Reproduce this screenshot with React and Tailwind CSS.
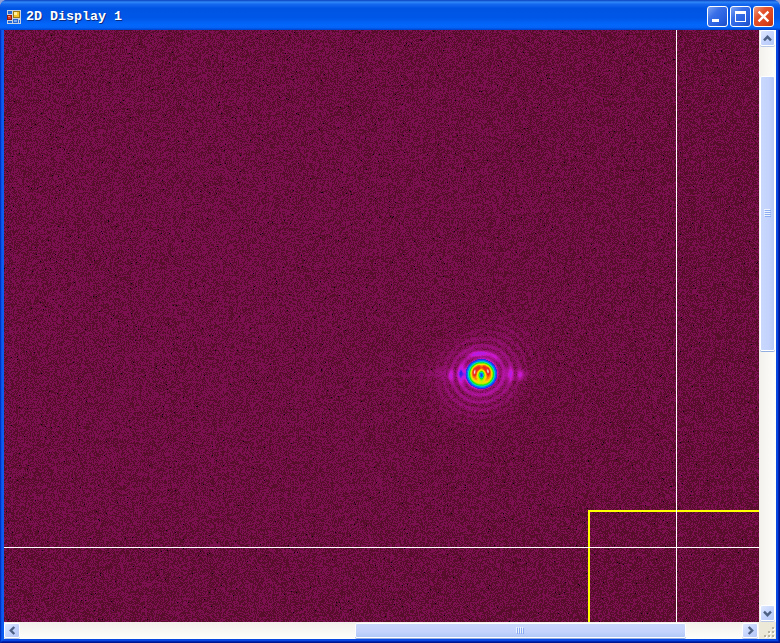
import { useEffect, useRef } from "react";

const W = 755;
const H = 592;

const STOPS = [
  [0.0, 88, 13, 42],
  [0.08, 126, 16, 82],
  [0.17, 158, 18, 130],
  [0.27, 205, 24, 205],
  [0.33, 170, 28, 235],
  [0.4, 50, 30, 225],
  [0.47, 0, 120, 250],
  [0.53, 0, 225, 190],
  [0.6, 20, 225, 20],
  [0.7, 190, 240, 0],
  [0.77, 255, 215, 0],
  [0.83, 250, 110, 10],
  [0.89, 232, 36, 24],
  [0.95, 235, 70, 60],
  [1.02, 245, 235, 235],
];

function colour(t) {
  if (t <= 0) return STOPS[0].slice(1);
  for (let i = 1; i < STOPS.length; i++) {
    if (t <= STOPS[i][0]) {
      const a = STOPS[i - 1];
      const b = STOPS[i];
      const k = (t - a[0]) / (b[0] - a[0]);
      return [1, 2, 3].map((c) => a[c] + (b[c] - a[c]) * k);
    }
  }
  return STOPS[STOPS.length - 1].slice(1);
}

const spot = (x, y, cx, cy, sx, sy) =>
  Math.exp(-(((x - cx) / sx) ** 2 + ((y - cy) / sy) ** 2) / 2);

// Beam intensity around its centre, without the sensor noise.
function beam(x, y) {
  const dx = x - 477;
  const dy = y - 343.5;
  const r = Math.hypot(dx * 0.98, dy * 1.04);
  const a = Math.atan2(dy, dx);
  if (r > 140 && Math.abs(dy) > 20) return 0;
  let t = 0;
  if (r < 15.6) {
    const k = Math.min(1, (15.6 - r) / 6);
    t = 0.35 + 0.35 * k;
    const ir = Math.hypot(dx, dy - 0.5);
    const up = 0.5 - 0.5 * Math.sin(a);
    t += 0.22 * Math.exp(-(((ir - 7) / 2.6) ** 2) / 2) * (0.15 + 0.85 * Math.sqrt(up));
    t += 0.14 * spot(dx, dy, -7, -1.8, 1.1, 2.2);
    t += 0.13 * spot(dx, dy, 6.5, -2.6, 1.1, 2);
    t -= 0.06 * spot(dx, dy, 0, -7, 1.5, 3);
    t -= 0.32 * spot(dx, dy, 0, 1, 1.8, 2.8);
    return t;
  }
  const wave = 0.5 + 0.5 * Math.cos((2 * Math.PI * (r - 22)) / 7.6 + 0.5 * Math.sin(2 * a));
  const north = Math.max(0, Math.cos(a + 0.78)) ** 6;
  const south = Math.max(0, -Math.cos(a + 0.9)) ** 2;
  t += 0.18 * Math.exp(-(r - 18) / 11) * (0.35 + 0.65 * wave);
  t += 0.03 * wave * Math.exp(-(((r - 32) / 11) ** 2));
  t += 0.04 * north * wave * Math.exp(-(((r - 50) / 14) ** 2));
  t += 0.03 * south * wave * Math.exp(-(((r - 42) / 15) ** 2));
  t += 0.29 * spot(dx, dy, -19.5, 0, 2.8, 5);
  t += 0.17 * spot(dx, dy, -3, -20, 7, 2);
  t += 0.16 * spot(dx, dy, -31, 1.5, 2.4, 4.2);
  t += 0.18 * spot(dx, dy, 28.5, 0, 2.8, 5);
  t += 0.15 * spot(dx, dy, 39, 1, 2.4, 3.8);
  t += 0.07 * spot(dx, dy, 13, -17, 5, 3);
  if (Math.abs(dx) > 35) {
    const lobes = 0.5 + 0.5 * Math.cos((2 * Math.PI * (Math.abs(dx) - 42)) / 9);
    const side = dx < 0 ? 0.085 : 0.04;
    t += side * lobes * Math.exp(-(Math.abs(dx) - 35) / 18) * Math.exp(-((dy / 7) ** 2));
    t += 0.022 * Math.exp(-(Math.abs(dx) - 35) / 65) * Math.exp(-((dy / 3) ** 2));
  }
  return t;
}

function paint(canvas) {
  const ctx = canvas.getContext("2d");
  const img = ctx.createImageData(W, H);
  let seed = 20731;
  const rand = () => {
    seed = (seed + 0x6d2b79f5) | 0;
    let t = Math.imul(seed ^ (seed >>> 15), 1 | seed);
    t = (t + Math.imul(t ^ (t >>> 7), 61 | t)) ^ t;
    return ((t ^ (t >>> 14)) >>> 0) / 4294967296;
  };
  for (let y = 0; y < H; y++) {
    const row = (rand() - 0.5) * 0.06;
    for (let x = 0; x < W; x++) {
      const raw = beam(x, y);
      const t = raw < 0.004 ? 0 : raw;
      const far = Math.hypot((x - 230) / 600, (y - 250) / 450);
      const chance = 0.57 - 0.19 * Math.min(1.2, far * far) + row + t * 4;
      let c;
      if (t < 0.27) {
        const bright = rand() < chance;
        c = colour((bright ? 0.075 : 0) + t * 0.9 + (t > 0.05 ? (rand() - 0.5) * 0.045 : 0));
        if (t < 0.04 && rand() < 0.0028) c = [8, 2, 10];
      } else {
        c = colour(t + (t < 0.45 ? 0.03 : 0) * (r01(t)) + (rand() - 0.5) * 0.02);
      }
      const i = (y * W + x) * 4;
      img.data[i] = c[0];
      img.data[i + 1] = c[1];
      img.data[i + 2] = c[2];
      img.data[i + 3] = 255;
    }
  }
  ctx.putImageData(img, 0, 0);
}

function r01(t) {
  return Math.max(0, Math.min(1, (t - 0.27) / 0.06));
}

function BeamView() {
  const ref = useRef(null);
  useEffect(() => paint(ref.current), []);
  return (
    <div className="relative h-[592px] w-[755px] shrink-0 overflow-hidden bg-[#6b0e43]">
      <canvas ref={ref} width={W} height={H} className="block" />
      <div className="absolute left-[584px] top-[480px] h-[120px] w-[180px] border-2 border-[#ffff00]" />
      <div className="absolute left-[672px] top-0 h-full w-px bg-white" />
      <div className="absolute left-0 top-[517px] h-px w-full bg-white" />
    </div>
  );
}

function AppIcon() {
  return (
    <svg width="14" height="14" viewBox="0 0 14 14" shapeRendering="crispEdges">
      <path fill="#c8d2e0" d="M0 0h14v14H0z" />
      <path fill="#2468d8" d="M1 1h4v3H1zM1 11h4v2H1zM12 10h1v3h-1z" />
      <path fill="#9a7a18" d="M6 1h7v7H6z" />
      <path fill="#f7c52c" d="M7 2h5v5H7z" />
      <path fill="#fff1a0" d="M7 2h3v3H7z" />
      <path fill="#8f1c12" d="M0 5h5v5H0z" />
      <path fill="#df4028" d="M1 6h3v3H1z" />
      <path fill="#f59a80" d="M1 6h2v1H1z" />
      <path fill="#2b67ce" d="M6 9h5v4H6z" />
      <path fill="#79aaf4" d="M7 10h3v2H7z" />
    </svg>
  );
}

function CaptionButton({ kind }) {
  const skin =
    kind === "close"
      ? "bg-[linear-gradient(135deg,#f0a084_0%,#e4532e_35%,#d8401a_75%,#b83410_100%)]"
      : "bg-[linear-gradient(135deg,#7ea5f4_0%,#3a70e8_35%,#2860e0_70%,#1e4cc4_100%)]";
  return (
    <button className={`h-[21px] w-[21px] rounded-[3px] border border-white ${skin}`}>
      <svg width="19" height="19" viewBox="0 0 19 19" shapeRendering="crispEdges" fill="#fff">
        {kind === "min" && <path d="M4 12h7v3H4z" />}
        {kind === "max" && <path fillRule="evenodd" d="M4 4h11v11H4zM5 7v7h9V7z" />}
        {kind === "close" && (
          <path
            shapeRendering="auto"
            fill="none"
            stroke="#fff"
            strokeWidth="2.3"
            d="M4.6 4.6l9.8 9.8M14.4 4.6l-9.8 9.8"
          />
        )}
      </svg>
    </button>
  );
}

const TURN = { up: "", right: "rotate-90", down: "rotate-180", left: "-rotate-90" };

function Arrow({ dir }) {
  const size = dir === "up" || dir === "down" ? "h-[16px] w-[15px]" : "h-[15px] w-[16px]";
  return (
    <button
      className={`flex shrink-0 items-center justify-center rounded-[2px] border border-white bg-[linear-gradient(135deg,#e0e9ff,#c3d3fd_55%,#b5c8f5)] shadow-[0_1px_0_#b9c8e6] ${size}`}
    >
      <svg width="9" height="9" viewBox="0 0 9 9" className={`shrink-0 ${TURN[dir]}`}>
        <path d="M1 6.3l3.5-3.5L8 6.3" fill="none" stroke="#4d6185" strokeWidth="2.4" />
      </svg>
    </button>
  );
}

function VerticalBar() {
  return (
    <div className="flex h-[592px] w-[17px] flex-col items-center bg-[linear-gradient(90deg,#f3f1ec,#fefefb)]">
      <Arrow dir="up" />
      <div className="mt-[30px] flex h-[275px] w-[15px] flex-col items-center justify-center gap-px rounded-[2px] border border-white bg-[linear-gradient(90deg,#c9d8fc,#c3d3fd_60%,#b5c8f6)] shadow-[0_1px_0_#93aee0]">
        {[0, 1, 2, 3].map((i) => (
          <div key={i} className="h-px w-[6px] bg-[#8cabf0] shadow-[-1px_-1px_0_#eef4fe]" />
        ))}
      </div>
      <div className="flex-1" />
      <Arrow dir="down" />
      <div className="h-px" />
    </div>
  );
}

function HorizontalBar() {
  return (
    <div className="flex h-[17px] w-[755px] items-center bg-[linear-gradient(180deg,#f3f1ec,#fefefb)]">
      <Arrow dir="left" />
      <div className="ml-[335px] flex h-[15px] w-[331px] items-center justify-center gap-px rounded-[2px] border border-white bg-[linear-gradient(180deg,#c9d8fc,#c3d3fd_60%,#b0c8f8)] shadow-[0_1px_0_#93aee0]">
        {[0, 1, 2, 3].map((i) => (
          <div key={i} className="h-[6px] w-px bg-[#8cabf0] shadow-[-1px_-1px_0_#eef4fe]" />
        ))}
      </div>
      <div className="flex-1" />
      <Arrow dir="right" />
      <div className="w-px" />
    </div>
  );
}

function SizeGrip() {
  return (
    <div className="h-[17px] w-[17px] bg-[#ece9d8]">
      <svg width="17" height="17" viewBox="0 0 17 17" shapeRendering="crispEdges">
        <path fill="#fff" d="M14 6h2v2h-2zM10 10h2v2h-2zM14 10h2v2h-2zM6 14h2v2H6zM10 14h2v2h-2zM14 14h2v2h-2z" />
        <path fill="#b8b4a3" d="M13 5h2v2h-2zM9 9h2v2H9zM13 9h2v2h-2zM5 13h2v2H5zM9 13h2v2H9zM13 13h2v2h-2z" />
      </svg>
    </div>
  );
}

export default function App() {
  return (
    <div className="h-[643px] w-[780px] overflow-hidden bg-[#8f9fd8]">
      <div className="flex h-full w-full flex-col overflow-hidden rounded-t-[7px] bg-[#0845dc]">
        <div className="flex h-[30px] shrink-0 items-center bg-[linear-gradient(180deg,#0a3fbf_0%,#3088f8_7%,#1468f0_14%,#0054e3_28%,#0057e7_60%,#0366fb_82%,#0463f5_92%,#0042cc_100%)] pl-[7px] pr-[6px] pt-[3px]">
          <AppIcon />
          <h1 className="ml-[5px] whitespace-pre font-['Liberation_Mono',monospace] text-[13.33px] font-bold leading-[14px] text-white [text-shadow:1px_1px_0_#0a2a80]">
            2D Display 1
          </h1>
          <div className="ml-auto flex gap-[2px]">
            <CaptionButton kind="min" />
            <CaptionButton kind="max" />
            <CaptionButton kind="close" />
          </div>
        </div>
        <div className="min-h-0 flex-1 border-x border-b border-b-[#001590] border-l-[#0030c0] border-r-[#001590]">
          <div className="h-full border-x border-b border-b-[#0024b4] border-l-[#0a50e8] border-r-[#0024b4]">
            <div className="h-full border-x-2 border-b-2 border-b-[#0848e0] border-l-[#0c5cf0] border-r-[#0848e0]">
              <div className="flex">
                <BeamView />
                <VerticalBar />
              </div>
              <div className="flex">
                <HorizontalBar />
                <SizeGrip />
              </div>
            </div>
          </div>
        </div>
      </div>
    </div>
  );
}
